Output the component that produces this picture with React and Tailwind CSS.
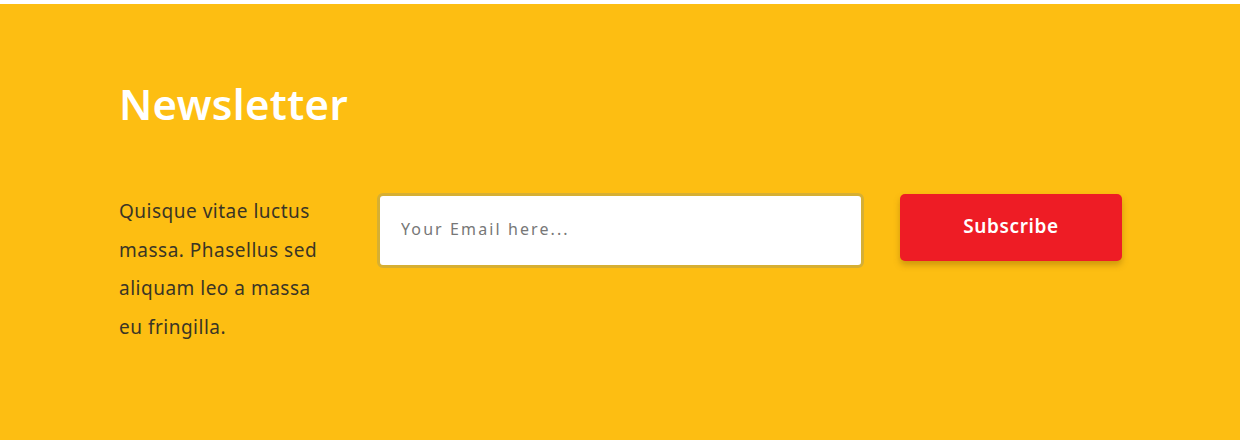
export default function App() {
  return (
    <div className="w-[1240px] h-[440px] bg-white pt-[4px]" style={{ fontFamily: '"Noto Sans", "Open Sans", sans-serif' }}>
      <div className="h-[436px] bg-[#FDBE12] pl-[119px] pt-[70px]">
        <h2 className="text-[42px] leading-[60px] font-semibold text-white tracking-[0.3px]">Newsletter</h2>
        <div className="flex items-start mt-[59px]">
          <p className="w-[210px] mr-[15px] text-[19px] leading-[38.5px] text-[#3a3525] font-normal tracking-[0.5px] -mt-[1px]">
            Quisque vitae luctus massa. Phasellus sed aliquam leo a massa eu fringilla.
          </p>
          <div className="ml-[33px] w-[487px] h-[75px] rounded-[6px] border-[3px] border-[#D6AF33] bg-white flex items-center pl-[21px]">
            <input
              className="w-full outline-none text-[16px] tracking-[2.1px] text-[#555] placeholder:text-[#777] bg-transparent -mt-[3px]"
              placeholder="Your Email here..."
            />
          </div>
          <button className="ml-[36px] mt-[1px] w-[222px] h-[67px] rounded-[5px] bg-[#EE1C25] text-white text-[19px] font-semibold tracking-[0.6px] shadow-[0_4px_6px_rgba(120,80,0,0.35)] pb-[2px]">
            Subscribe
          </button>
        </div>
      </div>
    </div>
  );
}
